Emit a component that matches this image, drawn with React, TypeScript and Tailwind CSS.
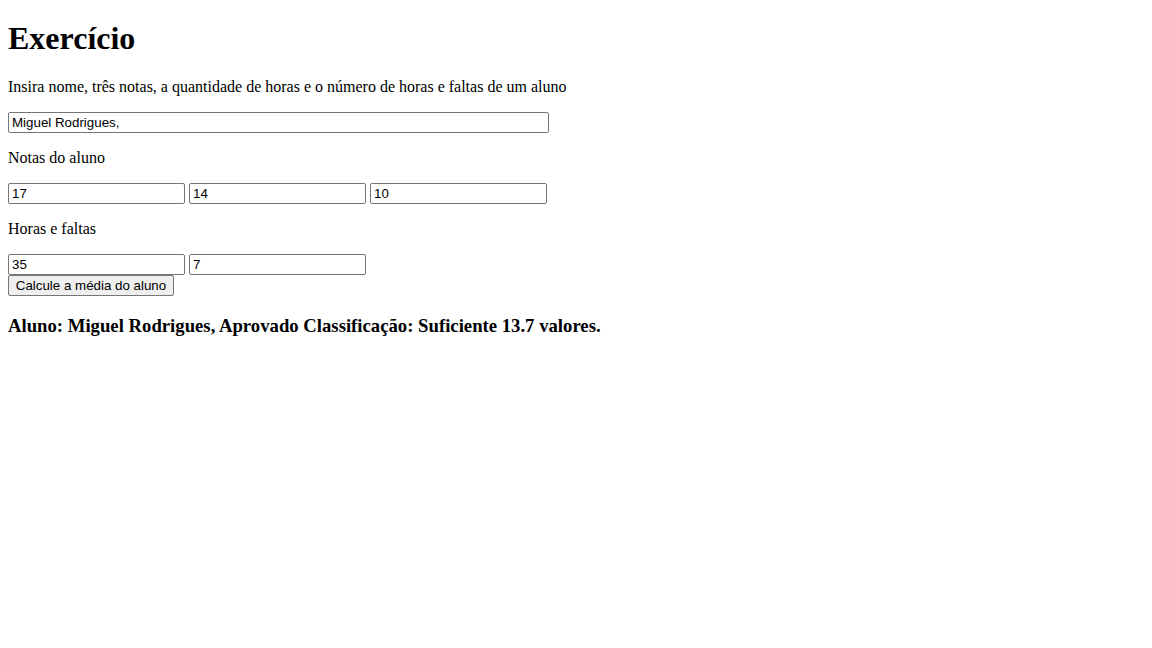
export default function App() {
    const input =
        "h-[21px] w-[177px] rounded-[2px] border border-[#767676] bg-white px-[3px] py-[1px] text-[13.33px] leading-[17px] text-black outline-none";

    return (
        <main className="min-h-screen bg-white px-2 font-['Liberation_Serif',serif] text-black">
            <h1 className="mt-[20px] mb-[21px] text-[32px] font-bold leading-[37px]">Exercício</h1>

            <p className="my-4 text-[16px] leading-[18px]">
                Insira nome, três notas, a quantidade de horas e o número de horas e faltas de um aluno
            </p>

            <input
                type="text"
                defaultValue="Miguel Rodrigues,"
                className={`${input} block w-[541px] font-['Liberation_Sans',sans-serif]`}
            />

            <p className="my-4 text-[16px] leading-[18px]">Notas do aluno</p>

            <div className="flex gap-[4px] font-['Liberation_Sans',sans-serif]">
                <input type="text" defaultValue="17" className={input} />
                <input type="text" defaultValue="14" className={input} />
                <input type="text" defaultValue="10" className={input} />
            </div>

            <p className="my-4 text-[16px] leading-[18px]">Horas e faltas</p>

            <div className="flex gap-[4px] font-['Liberation_Sans',sans-serif]">
                <input type="text" defaultValue="35" className={input} />
                <input type="text" defaultValue="7" className={input} />
            </div>

            <button
                type="button"
                className="block h-[21px] w-[166px] rounded-[2px] border border-[#767676] bg-[#efefef] font-['Liberation_Sans',sans-serif] text-[13.33px] leading-[17px] text-black"
            >
                Calcule a média do aluno
            </button>

            <h3 className="my-[18.72px] text-[18.72px] font-bold leading-[21.5px]">
                Aluno: Miguel Rodrigues, Aprovado Classificação: Suficiente 13.7 valores.
            </h3>
        </main>
    );
}
